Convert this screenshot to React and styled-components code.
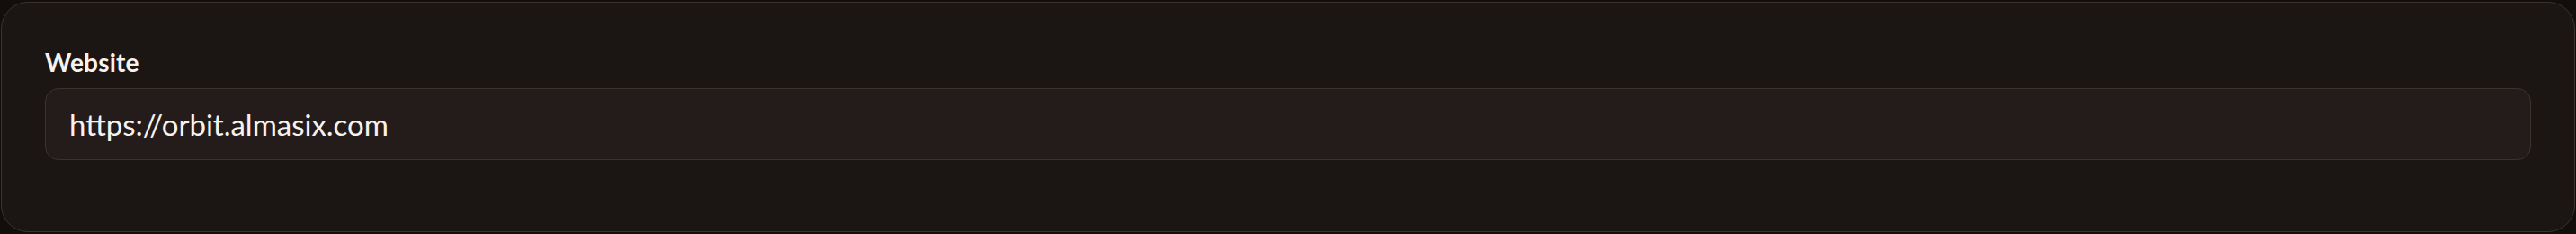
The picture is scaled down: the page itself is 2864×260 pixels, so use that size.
import React from 'react'
import styled, { createGlobalStyle } from 'styled-components'

const GlobalStyle = createGlobalStyle`
    html, body {
        margin: 0;
        padding: 0;
        background: #120e0c;
    }
    body {
        font-family: Lato, "Noto Sans", sans-serif;
        color: #f7f2ee;
    }
`

const Page = styled.div`
    padding: 2px 1px 2px 1px;
    height: 260px;
    box-sizing: border-box;
`

const Card = styled.section`
    box-sizing: border-box;
    height: 100%;
    background: #1b1613;
    border: 1.5px solid #3b322e;
    border-radius: 30px;
    padding: 49px 48px 0 48px;
    display: flex;
    flex-direction: column;
    gap: 12px;
`

const Label = styled.label`
    font-size: 28px;
    line-height: 34px;
    font-weight: 700;
    letter-spacing: 0.2px;
    color: #f7f2ee;
`

const Input = styled.input`
    box-sizing: border-box;
    width: 100%;
    height: 80px;
    background: #241c1a;
    border: 1.5px solid #3b322e;
    border-radius: 15px;
    padding: 0 26px;
    font-family: Lato, "Noto Sans", sans-serif;
    font-size: 33px;
    letter-spacing: 0;
    color: #f7f2ee;
    outline: none;
`

const WebsiteField = () => {
    return(
        <Page>
            <GlobalStyle />
            <Card>
                <Label htmlFor="website">Website</Label>
                <Input id="website" defaultValue="https://orbit.almasix.com" />
            </Card>
        </Page>
    )
}

export default WebsiteField
